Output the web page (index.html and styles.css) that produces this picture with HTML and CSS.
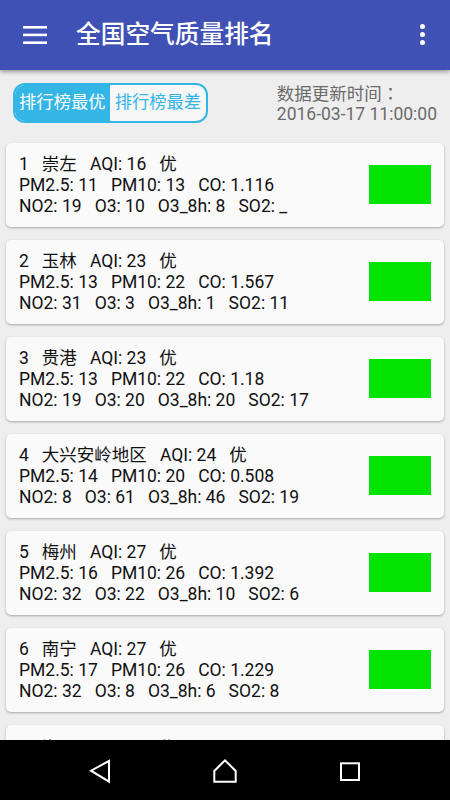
FILE: index.html
```html
<!DOCTYPE html>
<html lang="zh-CN">
<head>
<meta charset="utf-8">
<title>全国空气质量排名</title>
<link rel="stylesheet" href="styles.css">
</head>
<body>
<div class="app">
  <header class="toolbar">
    <svg class="menu-icon" width="24" height="18" viewBox="0 0 24 18">
      <rect x="0" y="0" width="24" height="2.6" fill="#fff"/>
      <rect x="0" y="7.6" width="24" height="2.6" fill="#fff"/>
      <rect x="0" y="15.4" width="24" height="2.6" fill="#fff"/>
    </svg>
    <h1 class="title">全国空气质量排名</h1>
    <div class="overflow">
      <span class="dot"></span><span class="dot"></span><span class="dot"></span>
    </div>
  </header>

  <main class="content">
    <div class="top-row">
      <div class="toggle">
        <span class="seg seg-active">排行榜最优</span>
        <span class="seg">排行榜最差</span>
      </div>
      <div class="update">
        <div>数据更新时间<span class="colon" lang="zh-TW">：</span></div>
        <div>2016-03-17 11:00:00</div>
      </div>
    </div>

    <div class="list">
      <div class="card">
        <div class="info">
          <div class="line">1   崇左   AQI: 16   优</div>
          <div class="line">PM2.5: 11   PM10: 13   CO: 1.116</div>
          <div class="line">NO2: 19   O3: 10   O3_8h: 8   SO2: _</div>
        </div>
        <div class="level"></div>
      </div>
      <div class="card">
        <div class="info">
          <div class="line">2   玉林   AQI: 23   优</div>
          <div class="line">PM2.5: 13   PM10: 22   CO: 1.567</div>
          <div class="line">NO2: 31   O3: 3   O3_8h: 1   SO2: 11</div>
        </div>
        <div class="level"></div>
      </div>
      <div class="card">
        <div class="info">
          <div class="line">3   贵港   AQI: 23   优</div>
          <div class="line">PM2.5: 13   PM10: 22   CO: 1.18</div>
          <div class="line">NO2: 19   O3: 20   O3_8h: 20   SO2: 17</div>
        </div>
        <div class="level"></div>
      </div>
      <div class="card">
        <div class="info">
          <div class="line">4   大兴安岭地区   AQI: 24   优</div>
          <div class="line">PM2.5: 14   PM10: 20   CO: 0.508</div>
          <div class="line">NO2: 8   O3: 61   O3_8h: 46   SO2: 19</div>
        </div>
        <div class="level"></div>
      </div>
      <div class="card">
        <div class="info">
          <div class="line">5   梅州   AQI: 27   优</div>
          <div class="line">PM2.5: 16   PM10: 26   CO: 1.392</div>
          <div class="line">NO2: 32   O3: 22   O3_8h: 10   SO2: 6</div>
        </div>
        <div class="level"></div>
      </div>
      <div class="card">
        <div class="info">
          <div class="line">6   南宁   AQI: 27   优</div>
          <div class="line">PM2.5: 17   PM10: 26   CO: 1.229</div>
          <div class="line">NO2: 32   O3: 8   O3_8h: 6   SO2: 8</div>
        </div>
        <div class="level"></div>
      </div>
      <div class="card card-peek">
        <div class="info">
          <div class="line">7   海口   AQI: 28   优</div>
        </div>
      </div>
    </div>
  </main>

  <nav class="navbar">
    <svg class="nav-icon" width="26" height="28" viewBox="0 0 26 28">
      <path d="M22 4 L4 13.7 L22 24.7 Z" fill="none" stroke="#fff" stroke-width="2" stroke-linejoin="miter"/>
    </svg>
    <svg class="nav-icon" width="26" height="28" viewBox="0 0 26 28">
      <path d="M2.3 24.7 V14 L13 3.3 L23.7 14 V24.7 Z" fill="none" stroke="#fff" stroke-width="2"/>
    </svg>
    <svg class="nav-icon" width="26" height="28" viewBox="0 0 26 28">
      <rect x="4" y="6.3" width="18" height="16.7" fill="none" stroke="#fff" stroke-width="2"/>
    </svg>
  </nav>
</div>
</body>
</html>
```
FILE: styles.css
```css
* { box-sizing: border-box; }

html, body {
  margin: 0;
  padding: 0;
}

body {
  font-family: Roboto, "Noto Sans CJK SC", sans-serif;
  background: #eeeeee;
}

.app {
  width: 450px;
  height: 800px;
  display: flex;
  flex-direction: column;
  overflow: hidden;
}

.toolbar {
  flex: 0 0 70px;
  height: 70px;
  background: #3f51b5;
  display: flex;
  align-items: center;
  box-shadow: 0 2px 4px rgba(0, 0, 0, 0.35);
  position: relative;
  z-index: 2;
}

.menu-icon {
  margin-left: 23px;
  margin-top: -1px;
  flex: 0 0 auto;
}

.title {
  margin: 0 0 0 29px;
  font-family: Roboto, "Noto Sans CJK SC", sans-serif;
  font-size: 24.7px;
  font-weight: 500;
  color: #ffffff;
  line-height: 1;
}

.overflow {
  margin-left: auto;
  margin-right: 25.5px;
  margin-top: -0.5px;
  display: flex;
  flex-direction: column;
  gap: 2.8px;
}

.dot {
  width: 5px;
  height: 5px;
  border-radius: 50%;
  background: #ffffff;
}

.content {
  flex: 1 1 auto;
  overflow: hidden;
  padding-top: 13px;
}

.top-row {
  display: flex;
  align-items: center;
  justify-content: space-between;
  height: 40px;
  padding: 0 13px 0 12.7px;
}

.toggle {
  display: flex;
  height: 40px;
  border: 2px solid #33b5e5;
  border-radius: 12px;
  overflow: hidden;
  background: #f7f7f7;
}

.seg {
  display: flex;
  align-items: center;
  padding: 0 4.8px 0 4.4px;
  font-size: 17.3px;
  color: #33b5e5;
  line-height: 1;
}

.seg-active {
  background: #33b5e5;
  color: #ffffff;
}

.update {
  font-size: 17.5px;
  line-height: 20px;
  color: #6b6b6b;
  padding-top: 1px;
}

.colon {
  font-family: "Noto Sans CJK TC", sans-serif;
}

.list {
  margin-top: 20px;
  display: flex;
  flex-direction: column;
  gap: 13px;
  padding: 0 6px 10px;
}

.card {
  height: 84px;
  flex: 0 0 84px;
  background: #fafafa;
  border-radius: 5px;
  box-shadow: 0 1px 2.5px rgba(0, 0, 0, 0.3);
  display: flex;
  align-items: center;
  justify-content: space-between;
  padding: 0 13px;
}

.card-peek {
  align-items: flex-start;
  padding-top: 12px;
}

.info {
  padding-top: 0.5px;
}

.line {
  font-size: 17.5px;
  line-height: 20.6px;
  color: #111111;
  white-space: pre;
}

.level {
  width: 62px;
  height: 39px;
  background: #00e400;
  margin-top: -0.5px;
}

.navbar {
  flex: 0 0 60px;
  height: 60px;
  background: #000000;
  display: flex;
  align-items: center;
  justify-content: center;
  gap: 99px;
  position: relative;
  z-index: 2;
}

.nav-icon {
  display: block;
  margin-top: 1px;
}
```
